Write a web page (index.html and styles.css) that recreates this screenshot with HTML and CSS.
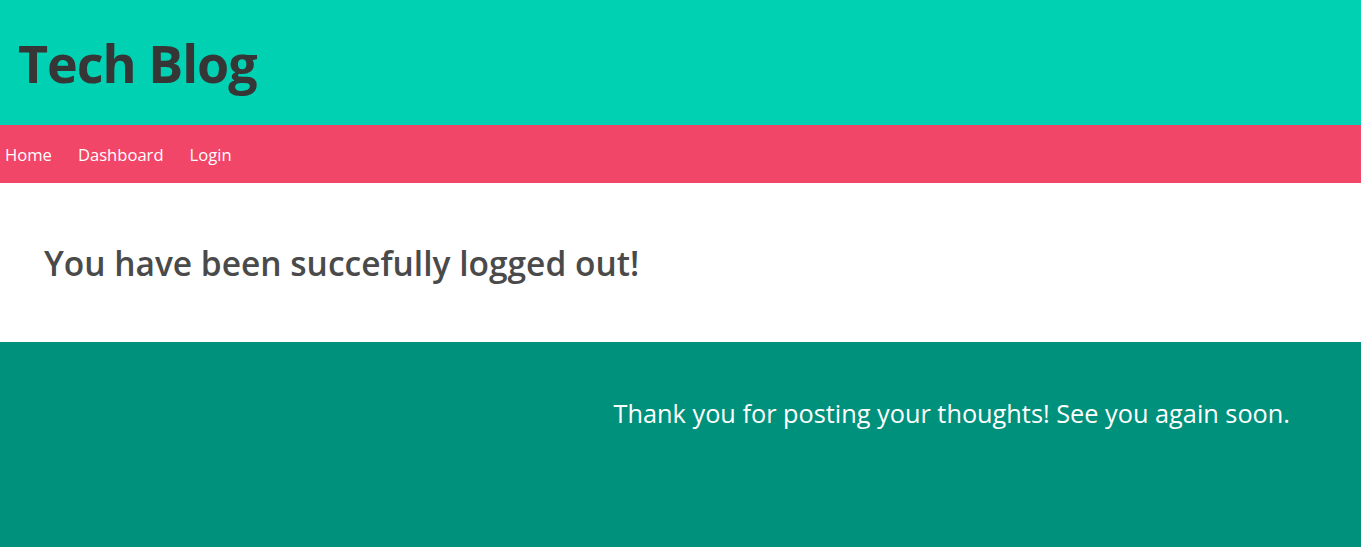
FILE: index.html
```html
<!DOCTYPE html>
<html lang="en">
<head>
<meta charset="utf-8">
<title>Tech Blog</title>
<link rel="stylesheet" href="styles.css">
</head>
<body>
<header class="hero">
  <h1 class="brand">Tech Blog</h1>
</header>
<nav class="navbar">
  <a class="nav-link" href="#">Home</a>
  <a class="nav-link" href="#">Dashboard</a>
  <a class="nav-link" href="#">Login</a>
</nav>
<main class="content">
  <h2 class="message">You have been succefully logged out!</h2>
</main>
<footer class="footer">
  <p class="footer-text">Thank you for posting your thoughts! See you again soon.</p>
</footer>
</body>
</html>
```

FILE: styles.css
```css
* { box-sizing: border-box; }
html, body { margin: 0; padding: 0; }
body {
  font-family: "Open Sans", "Noto Sans", sans-serif;
  min-height: 100vh;
  display: flex;
  flex-direction: column;
  background: #ffffff;
}
.hero {
  background: #00d1b2;
  height: 125px;
  display: flex;
  align-items: center;
  padding: 0 18px;
}
.brand {
  margin: 0;
  font-size: 52px;
  font-weight: 700;
  color: #363636;
  line-height: 1;
  letter-spacing: -1px;
}
.navbar {
  background: #f14668;
  height: 58px;
  display: flex;
  align-items: center;
  gap: 26px;
  padding: 0 5px;
}
.nav-link {
  color: #ffffff;
  text-decoration: none;
  font-size: 16.6px;
}
.content {
  height: 159px;
  display: flex;
  align-items: center;
  padding: 0 44px;
}
.message {
  margin: 0;
  font-size: 33.5px;
  font-weight: 600;
  color: #4a4a4a;
}
.footer {
  flex: 1;
  background: #00917c;
  padding: 54px 71px 0 0;
  text-align: right;
}
.footer-text {
  margin: 0;
  color: #ffffff;
  font-size: 25.3px;
}
```
